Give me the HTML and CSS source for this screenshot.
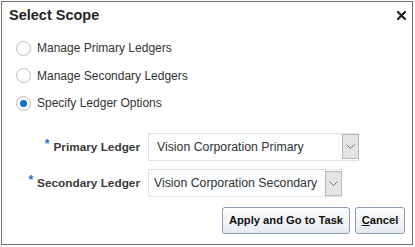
FILE: index.html
```html
<!DOCTYPE html>
<html>
<head>
<meta charset="utf-8">
<link rel="stylesheet" href="styles.css">
</head>
<body>
<div class="dialog">
  <div class="header">
    <span class="title">Select Scope</span>
    <span class="close"><svg width="9" height="9" viewBox="0 0 9 9"><path d="M1 1L8 8M8 1L1 8" stroke="#222" stroke-width="2.2" stroke-linecap="square"/></svg></span>
  </div>
  <div class="radios">
    <label class="radio"><span class="dot"></span><span class="rtext">Manage Primary Ledgers</span></label>
    <label class="radio"><span class="dot"></span><span class="rtext">Manage Secondary Ledgers</span></label>
    <label class="radio"><span class="dot checked"></span><span class="rtext">Specify Ledger Options</span></label>
  </div>
  <div class="form">
    <div class="label"><span class="req">*</span>Primary Ledger</div>
    <div class="field primary"><span class="val">Vision Corporation Primary</span><span class="drop"><svg width="9" height="5" viewBox="0 0 9 5"><path d="M0.5 0.5L4.5 4.5L8.5 0.5" fill="none" stroke="#777" stroke-width="1"/></svg></span></div>
    <div class="label"><span class="req">*</span>Secondary Ledger</div>
    <div class="field secondary"><span class="val">Vision Corporation Secondary</span><span class="drop"><svg width="9" height="5" viewBox="0 0 9 5"><path d="M0.5 0.5L4.5 4.5L8.5 0.5" fill="none" stroke="#777" stroke-width="1"/></svg></span></div>
  </div>
  <div class="footer">
    <button class="btn apply">Apply and Go to Task</button>
    <button class="btn cancel"><u>C</u>ancel</button>
  </div>
</div>
</body>
</html>
```
FILE: styles.css
```css
html, body {
  margin: 0;
  padding: 0;
  background: #fff;
}
body {
  font-family: "Liberation Sans", Arial, sans-serif;
  color: #333;
}
.dialog {
  margin: 1px 0 0 1px;
  width: 412px;
  height: 244px;
  box-sizing: border-box;
  border: 1px solid #727272;
  display: flex;
  flex-direction: column;
}
.header {
  height: 26px;
  display: flex;
  align-items: center;
  justify-content: space-between;
  padding: 0 6px 0 7px;
}
.title {
  font-size: 14.5px;
  font-weight: bold;
  color: #252525;
}
.close {
  display: flex;
  margin-top: 1px;
}
.radios {
  padding: 6.25px 0 0 14px;
  display: flex;
  flex-direction: column;
}
.radio {
  height: 27.5px;
  display: flex;
  align-items: center;
  font-size: 12px;
  color: #333;
}
.dot {
  width: 15px;
  height: 15px;
  box-sizing: border-box;
  border: 1px solid #bdbdbd;
  border-radius: 50%;
  background: #fdfdfd;
  margin-right: 6px;
  display: flex;
  align-items: center;
  justify-content: center;
}
.dot.checked::after {
  content: "";
  width: 7px;
  height: 7px;
  border-radius: 50%;
  background: #0a72d1;
}
.form {
  margin-top: 16px;
  display: grid;
  grid-template-columns: 138px auto;
  column-gap: 8px;
  row-gap: 8.5px;
  justify-content: start;
  align-items: center;
}
.label {
  text-align: right;
  font-size: 11.8px;
  font-weight: bold;
  color: #3a3a3a;
  white-space: nowrap;
}
.req {
  color: #1a6fc7;
  font-size: 12px;
  position: relative;
  top: -3px;
  margin-right: 4px;
}
.field {
  height: 28px;
  box-sizing: border-box;
  border: 1px solid #dfe3e8;
  background: #fcfdfe;
  display: flex;
  align-items: center;
  justify-content: space-between;
  font-size: 12.3px;
  color: #333;
  white-space: nowrap;
}
.field.primary {
  width: 211px;
  padding-left: 8px;
}
.field.secondary {
  width: 194px;
  padding-left: 5px;
}
.drop {
  width: 17px;
  height: 25px;
  box-sizing: border-box;
  border: 1px solid #b8b8b8;
  background: #e4e4e4;
  display: flex;
  align-items: center;
  justify-content: center;
  margin-right: -1px;
}
.footer {
  margin-top: 9.5px;
  display: flex;
  justify-content: flex-end;
  gap: 5px;
  padding-right: 7px;
}
.btn {
  height: 27px;
  box-sizing: border-box;
  border: 1px solid #8d9cb0;
  border-radius: 3px;
  background: linear-gradient(#fbfcfd, #e7ebf0);
  font-family: "Liberation Sans", Arial, sans-serif;
  font-size: 11.2px;
  font-weight: bold;
  color: #111;
  padding: 0;
  margin: 0;
  white-space: nowrap;
  text-align: center;
}
.btn.apply {
  width: 128px;
}
.btn.cancel {
  width: 50px;
}
```
